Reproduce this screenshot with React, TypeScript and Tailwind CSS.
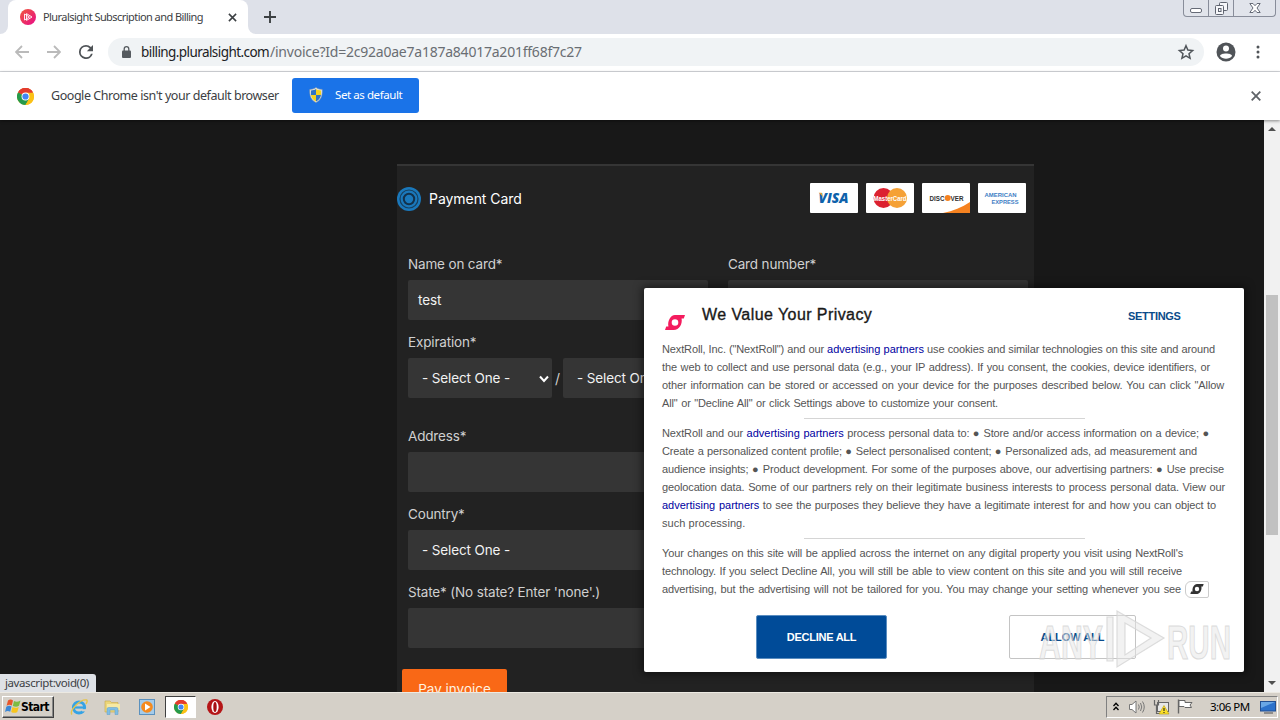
import React from "react";

const ui = "font-['Noto_Sans',sans-serif]";
const arial = "font-['Liberation_Sans',sans-serif]";

function ChromeLogo({ className }: { className: string }) {
  return (
    <svg viewBox="0 0 24 24" className={className}>
      <circle cx="12" cy="12" r="12" fill="#fbc116" />
      <path d="M12 12 L1.6 6 A12 12 0 0 1 22.4 6 Z" fill="#e33b2e" />
      <path d="M12 12 L1.6 6 A12 12 0 0 0 12 24 L17.2 15 Z" fill="#269a4b" />
      <path d="M12 6.5 H22.7 A12 12 0 0 1 12 24 L17.2 15 Z" fill="#fbc116" />
      <path d="M12 12 L1.6 6 A12 12 0 0 1 22.6 6.5 H12 Z" fill="#e33b2e" />
      <circle cx="12" cy="12" r="5.6" fill="#fff" />
      <circle cx="12" cy="12" r="4.4" fill="#4285f4" />
    </svg>
  );
}

function RollMark({ className }: { className: string }) {
  return (
    <svg viewBox="0 0 20 15" className={className} fill="currentColor">
      <path d="M10 0 H20 L18.8 3.6 H16.6 C17.6 9 14.5 15 8.5 15 H0 L1.2 11.4 H3.4 C2.4 6 5.5 0 10 0 Z M10 4.2 A3.3 3.3 0 1 0 10 10.8 A3.3 3.3 0 1 0 10 4.2 Z" fillRule="evenodd" />
    </svg>
  );
}

function TabStrip() {
  return (
    <div className="flex h-[34px] justify-between bg-[#dee1e9]">
      <div className="flex">
        <div className="flex w-2 items-end bg-white">
          <div className="h-full w-2 rounded-br-lg bg-[#dee1e9]" />
        </div>
        <div className="flex w-60 items-center rounded-t-lg bg-white pl-3">
          <svg viewBox="0 0 16 16" className="h-4 w-4 shrink-0">
            <defs>
              <linearGradient id="ps" x1="0" y1="0" x2="1" y2="1">
                <stop offset="0" stopColor="#f05a3a" />
                <stop offset="1" stopColor="#e80a89" />
              </linearGradient>
            </defs>
            <circle cx="8" cy="8" r="8" fill="url(#ps)" />
            <path d="M6.5 4.6 L12 8 L6.5 11.4 Z M4.5 5 V11 L9.5 8 Z" fill="none" stroke="#fff" strokeWidth="0.9" />
          </svg>
          <span className={`${ui} ml-[7px] w-[184px] shrink-0 whitespace-nowrap text-[11px] tracking-[-0.56px] text-[#3c4043]`}>
            Pluralsight Subscription and Billing
          </span>
          <svg viewBox="0 0 10 10" className="ml-px h-[9px] w-[9px] shrink-0" stroke="#3c4043" strokeWidth="1.7">
            <path d="M1 1 L9 9 M9 1 L1 9" />
          </svg>
        </div>
        <div className="w-2 bg-white">
          <div className="h-full rounded-bl-lg bg-[#dee1e9]" />
        </div>
        <svg viewBox="0 0 12 12" className="ml-2 mt-[11px] h-3 w-3" stroke="#3c4043" strokeWidth="1.9">
          <path d="M6 0 V12 M0 6 H12" />
        </svg>
      </div>
      <div className="mr-[4px] flex h-[17px] w-[93px] rounded-b-[4px] border border-t-0 border-[#888d9a] bg-[#e1e4eb]">
        <div className="flex w-[25px] justify-center border-r border-[#888d9a] pt-2">
          <div className="h-[5px] w-3 rounded-[2px] border border-[#666b77] bg-white" />
        </div>
        <div className="flex w-[25px] justify-center border-r border-[#888d9a] pt-[2px]">
          <svg viewBox="0 0 13 13" className="h-[13px] w-[13px]" fill="#f6f7fa" stroke="#5f6470">
            <rect x="4.5" y="0.5" width="8" height="8" rx="1" />
            <rect x="0.5" y="3.5" width="8" height="9" rx="1" />
            <rect x="3.5" y="6.5" width="2.5" height="3" />
          </svg>
        </div>
        <div className="flex flex-1 justify-center pt-[3px]">
          <svg viewBox="0 0 12 10" className="h-[10px] w-3" fill="#fff" stroke="#666b77">
            <path d="M0.8 0.5 H4 L6 2.7 L8 0.5 H11.2 L8 5 L11.2 9.5 H8 L6 7.3 L4 9.5 H0.8 L4 5 Z" />
          </svg>
        </div>
      </div>
    </div>
  );
}

function Toolbar() {
  return (
    <div className="flex h-[38px] items-center border-b border-[#d8dade] bg-white pb-px">
      <div className="flex w-[108px] items-center pl-[15px]">
        <svg viewBox="0 0 14 14" className="h-[14px] w-[14px]" fill="none" stroke="#bababa" strokeWidth="1.8">
          <path d="M14 7 H1.5 M7 1 L1 7 L7 13" />
        </svg>
        <svg viewBox="0 0 14 14" className="ml-[18px] h-[14px] w-[14px]" fill="none" stroke="#bababa" strokeWidth="1.8">
          <path d="M0 7 H12.5 M7 1 L13 7 L7 13" />
        </svg>
        <svg viewBox="4 4 16 16" className="ml-[18px] h-[14px] w-[14px]" fill="#4f5357">
          <path d="M17.65 6.35A7.96 7.96 0 0 0 12 4a8 8 0 1 0 7.73 10h-2.08A6 6 0 1 1 12 6c1.66 0 3.14.69 4.22 1.78L13 11h7V4z" />
        </svg>
      </div>
      <div className="flex h-7 w-[1096px] items-center rounded-full bg-[#f0f3f5] pl-[14px]">
        <svg viewBox="0 0 9 12" className="h-3 w-[9px]">
          <rect x="0" y="4.5" width="9" height="7.5" rx="1" fill="#555a5f" />
          <path d="M2.2 5 V3 A2.3 2.3 0 0 1 6.8 3 V5" fill="none" stroke="#555a5f" strokeWidth="1.3" />
        </svg>
        <div className={`${ui} ml-[10px] flex whitespace-nowrap text-[14px] leading-5 text-[#6a6e73]`}>
          <span className="w-[129px] text-[13.5px] tracking-[-0.58px] text-[#202124]">billing.pluralsight.com</span>
          <span className="tracking-[-0.23px]">/invoice?Id=2c92a0ae7a187a84017a201ff68f7c27</span>
        </div>
        <svg viewBox="0 0 24 24" className="ml-auto mr-[9px] h-[18px] w-[18px]" fill="none" stroke="#50555a" strokeWidth="2">
          <path d="M12 3.6 L14.5 9.4 L20.8 10 L16 14.2 L17.4 20.4 L12 17.1 L6.6 20.4 L8 14.2 L3.2 10 L9.5 9.4 Z" />
        </svg>
      </div>
      <svg viewBox="0 0 20 20" className="ml-3 h-5 w-5">
        <circle cx="10" cy="10" r="9.5" fill="#505458" />
        <circle cx="10" cy="6.6" r="3" fill="#fff" />
        <path d="M4 14 C4 10.5 16 10.5 16 14 C13.5 17.5 6.5 17.5 4 14 Z" fill="#fff" />
      </svg>
      <svg viewBox="0 0 4 14" className="ml-5 h-[14px] w-1" fill="#505458">
        <circle cx="2" cy="2" r="1.5" />
        <circle cx="2" cy="7" r="1.5" />
        <circle cx="2" cy="12" r="1.5" />
      </svg>
    </div>
  );
}

function InfoBar() {
  return (
    <div className="relative z-10 flex h-12 items-center bg-white pl-[17px] shadow-[0_1px_3px_rgba(0,0,0,0.45)]">
      <ChromeLogo className="h-[17px] w-[17px]" />
      <span className={`${ui} ml-[17px] w-[241px] whitespace-nowrap text-[12.5px] tracking-[-0.45px] text-[#3c4043]`}>
        Google Chrome isn't your default browser
      </span>
      <button className="mb-[2px] flex h-[35px] w-[127px] items-center rounded-[3px] bg-[#1a73e8] pl-[17px]">
        <svg viewBox="0 0 14 16" className="h-4 w-[14px]">
          <path d="M7 0.5 C5 2 3 2.4 0.8 2.4 C0.5 9 2 13 7 15.5 C12 13 13.5 9 13.2 2.4 C11 2.4 9 2 7 0.5 Z" fill="#e8e9e4" stroke="#8c98a6" strokeWidth="0.6" />
          <path d="M7 2 C5.5 3 4 3.4 2 3.5 L2 8 H7 Z M7 8 H12 C11.5 11 10 13 7 14.4 Z" fill="#2f73c7" />
          <path d="M7 2 C8.5 3 10 3.4 12 3.5 L12 8 H7 Z M7 8 H2 C2.5 11 4 13 7 14.4 Z" fill="#f5d21f" />
        </svg>
        <span className={`${ui} ml-[12px] whitespace-nowrap text-[11.5px] tracking-[-0.42px] text-white`}>Set as default</span>
      </button>
      <svg viewBox="0 0 10 10" className="ml-auto mr-[19px] h-[10px] w-[10px]" stroke="#5f6368" strokeWidth="1.8">
        <path d="M0.7 0.7 L9.3 9.3 M9.3 0.7 L0.7 9.3" />
      </svg>
    </div>
  );
}

function CardLogos() {
  return (
    <div className="flex gap-2">
      <svg viewBox="0 0 48 30" className="h-[30px] w-12">
        <rect width="48" height="30" rx="1" fill="#fff" />
        <text x="8.5" y="20" fontFamily="Open Sans, sans-serif" fontWeight="800" fontStyle="italic" fontSize="14" textLength="30" lengthAdjust="spacingAndGlyphs" fill="#0e62ab">VISA</text>
        <path d="M8.6 9.8 H11.6 L13.4 15 C12 12.6 10.6 11 8.6 9.8 Z" fill="#f0a52b" />
      </svg>
      <svg viewBox="0 0 48 30" className="h-[30px] w-12">
        <rect width="48" height="30" rx="1" fill="#fff" />
        <circle cx="17.5" cy="15" r="10" fill="#dc2130" />
        <circle cx="31" cy="15" r="10" fill="#f5a136" />
        <text x="7.5" y="18" fontFamily="Liberation Sans, sans-serif" fontWeight="700" fontSize="8" textLength="33" lengthAdjust="spacingAndGlyphs" fill="#fff">MasterCard</text>
      </svg>
      <svg viewBox="0 0 48 30" className="h-[30px] w-12">
        <rect width="48" height="30" rx="1" fill="#fff" />
        <path d="M21 30 C31 28 40 24.5 48 19 V30 Z" fill="#f58220" />
        <text x="7.5" y="17.7" fontFamily="Liberation Sans, sans-serif" fontWeight="700" fontSize="7.5" textLength="15" lengthAdjust="spacingAndGlyphs" fill="#2f2f31">DISC</text>
        <circle cx="25.7" cy="15" r="3" fill="#f58220" />
        <text x="28.5" y="17.7" fontFamily="Liberation Sans, sans-serif" fontWeight="700" fontSize="7.5" textLength="13" lengthAdjust="spacingAndGlyphs" fill="#2f2f31">VER</text>
      </svg>
      <svg viewBox="0 0 48 30" className="h-[30px] w-12">
        <rect width="48" height="30" rx="1" fill="#fff" />
        <g fontFamily="Liberation Sans, sans-serif" fontWeight="700" fontSize="6" fill="#3d7ec4">
          <text x="6.5" y="14" textLength="32" lengthAdjust="spacingAndGlyphs">AMERICAN</text>
          <text x="13.5" y="21" textLength="27" lengthAdjust="spacingAndGlyphs">EXPRESS</text>
        </g>
      </svg>
    </div>
  );
}

function Label({ children }: { children: React.ReactNode }) {
  return <div className="h-7 whitespace-nowrap pt-[2px] text-[13.5px] leading-5 tracking-[-0.16px] text-[#d0d0d0]">{children}</div>;
}

const field = "flex h-10 items-center rounded-[2px] bg-[#353535] pt-px text-[13.5px] tracking-[-0.12px] text-[#f2f2f2] whitespace-nowrap";

function PaymentForm() {
  return (
    <div className="ml-[397px] mt-11 flex h-[528px] w-[637px] flex-col border-t-2 border-[#353535] bg-[#222] font-['Inter',sans-serif]">
      <div className="flex h-[66px] shrink-0 items-center pr-2">
        <svg viewBox="0 0 24 24" className="h-6 w-6" fill="none" stroke="#1b7fc4">
          <circle cx="12" cy="12" r="12" fill="#1a78bb" stroke="none" />
          <circle cx="12" cy="12" r="9" stroke="#183f5d" strokeWidth="1.2" />
          <circle cx="12" cy="12" r="5.2" stroke="#12314b" strokeWidth="2" />
        </svg>
        <span className="mb-px ml-2 text-[14px] tracking-[-0.05px] text-white">Payment Card</span>
        <div className="mb-[2px] ml-auto">
          <CardLogos />
        </div>
      </div>
      <div className="flex gap-5 pl-[11px] pt-5">
        <div className="w-[300px]">
          <Label>Name on card*</Label>
          <div className={`${field} px-[10px]`}>test</div>
        </div>
        <div className="w-[300px]">
          <Label>Card number*</Label>
          <div className={field} />
        </div>
      </div>
      <div className="w-[311px] pl-[11px] pt-[10px]">
        <Label>Expiration*</Label>
        <div className="flex items-center">
          <div className={`${field} w-36 justify-between pl-[14px] pr-[3px]`}>
            <span>- Select One -</span>
            <svg viewBox="0 0 10 8" className="h-2 w-[10px]" fill="none" stroke="#fff" strokeWidth="2">
              <path d="M1 1.5 L5 6 L9 1.5" />
            </svg>
          </div>
          <span className="w-[11px] text-center text-[14px] text-[#d0d0d0]">/</span>
          <div className={`${field} w-36 pl-[14px]`}>- Select One -</div>
        </div>
      </div>
      <div className="w-[311px] pl-[11px] pt-[26px]">
        <Label>Address*</Label>
        <div className={field} />
      </div>
      <div className="w-[311px] pl-[11px] pt-[10px]">
        <Label>Country*</Label>
        <div className={`${field} pl-[14px]`}>- Select One -</div>
      </div>
      <div className="w-[311px] pl-[11px] pt-[10px]">
        <Label>State* (No state? Enter 'none'.)</Label>
        <div className={field} />
      </div>
      <button className="ml-[5px] mt-[21px] h-10 w-[105px] shrink-0 rounded-[2px] bg-[#f96816] text-[13.5px] text-[#fff3e0]">
        Pay invoice
      </button>
    </div>
  );
}

function Line({ w, children }: { w: string; children: React.ReactNode }) {
  return <div className={`${w} h-[18px] whitespace-nowrap [text-align-last:justify]`}>{children}</div>;
}

function Partners() {
  return <a className="tracking-[0px] text-[#0000a0]">advertising partners</a>;
}

function PrivacyDialog() {
  return (
    <div className={`absolute left-[644px] top-[168px] flex h-[384px] w-[600px] flex-col rounded-[2px] bg-white pl-[18px] shadow-[0_0_8px_2px_rgba(0,0,0,0.5)] ${arial}`}>
      <div className="flex h-[52px] shrink-0">
        <RollMark className="ml-[3px] mt-[27px] h-[15px] w-5 text-[#f41c5e]" />
        <h1 className="ml-[17px] mt-[16px] w-[426px] whitespace-nowrap text-[16px] leading-[22px] tracking-[0.43px] text-[#191919] [-webkit-text-stroke:0.35px]">We Value Your Privacy</h1>
        <span className="mt-[19px] text-[11px] font-bold leading-[18px] tracking-[-0.3px] text-[#0a4b8a]">SETTINGS</span>
      </div>
      <div className="text-[11px] leading-[18px] tracking-[-0.13px] text-[#555]">
        <Line w="w-[553px]">NextRoll, Inc. ("NextRoll") and our <Partners /> use cookies and similar technologies on this site and around</Line>
        <Line w="w-[548px]">the web to collect and use personal data (e.g., your IP address). If you consent, the cookies, device identifiers, or</Line>
        <Line w="w-[562px]">other information can be stored or accessed on your device for the purposes described below. You can click "Allow</Line>
        <Line w="w-[336px]">All" or "Decline All" or click Settings above to customize your consent.</Line>
        <div className="mb-[5px] ml-[142px] mt-[6px] h-px w-[281px] bg-[#d5d5d5]" />
        <Line w="w-[547px]">NextRoll and our <Partners /> process personal data to: ● Store and/or access information on a device; ●</Line>
        <Line w="w-[535px]">Create a personalized content profile; ● Select personalised content; ● Personalized ads, ad measurement and</Line>
        <Line w="w-[562px]">audience insights; ● Product development. For some of the purposes above, our advertising partners: ● Use precise</Line>
        <Line w="w-[563px]">geolocation data. Some of our partners rely on their legitimate business interests to process personal data. View our</Line>
        <Line w="w-[554px]"><Partners /> to see the purposes they believe they have a legitimate interest for and how you can object to</Line>
        <div className="h-[18px] tracking-[0.05px]">such processing.</div>
        <div className="mb-[5px] ml-[142px] mt-[6px] h-px w-[281px] bg-[#d5d5d5]" />
        <Line w="w-[521px]">Your changes on this site will be applied across the internet on any digital property you visit using NextRoll's</Line>
        <Line w="w-[520px]">technology. If you select Decline All, you will still be able to view content on this site and you will still receive</Line>
        <div className="flex items-center">
          <Line w="w-[519px]">advertising, but the advertising will not be tailored for you. You may change your setting whenever you see</Line>
          <div className="ml-1 flex h-[17px] w-6 items-center justify-center rounded-l-[6px] rounded-r-[2px] border border-[#ccc]">
            <RollMark className="h-[10px] w-[14px] text-[#333]" />
          </div>
        </div>
      </div>
      <div className="mt-[17px] flex text-[11px] font-bold">
        <button className="ml-[94px] h-[44px] w-[131px] rounded-[2px] border border-[#5a8dc0] bg-[#004b98] pt-px tracking-[-0.25px] text-white">DECLINE ALL</button>
        <button className="ml-[122px] h-[44px] w-[127px] rounded-[2px] border border-[#c4c4c4] bg-white tracking-[-0.05px] text-[#0a4b8a]">ALLOW ALL</button>
      </div>
    </div>
  );
}

function Watermark() {
  return (
    <svg viewBox="0 0 200 64" className="pointer-events-none absolute left-[1036px] top-[488px] h-16 w-[200px]">
      <g fill="#e6e6e6" fillOpacity="0.5" stroke="#d4d4d4" strokeWidth="1.2" strokeOpacity="0.8" fontFamily="Liberation Sans Narrow, Liberation Sans, sans-serif" fontWeight="700" fontSize="49">
        <text x="3" y="51" textLength="64" lengthAdjust="spacingAndGlyphs">ANY</text>
        <text x="131" y="51" textLength="64" lengthAdjust="spacingAndGlyphs">RUN</text>
        <path fillRule="evenodd" d="M81 3 L128 30 L81 59 Z M89 15 L115 30 L89 47 Z" />
        <path d="M71 9 H77 V53 H71 Z" />
      </g>
    </svg>
  );
}

function Scrollbar() {
  return (
    <div className="flex w-4 flex-col items-center bg-[#f1f1f1]">
      <svg viewBox="0 0 8 4" className="mt-[7px] h-1 w-2" fill="#505050"><path d="M0 4 L4 0 L8 4 Z" /></svg>
      <div className="mt-[164px] h-60 w-3 bg-[#c1c1c1]" />
      <svg viewBox="0 0 8 4" className="mb-[7px] mt-auto h-1 w-2" fill="#505050"><path d="M0 0 L4 4 L8 0 Z" /></svg>
    </div>
  );
}

function Taskbar() {
  return (
    <div className="flex h-7 items-center border-t border-[#ece9e2] bg-[#d5d0c8]">
      <button className="ml-[2px] flex h-[22px] w-[52px] items-center border border-b-[#404040] border-l-white border-r-[#404040] border-t-white pl-[2px] shadow-[inset_-1px_-1px_0_#888]">
        <svg viewBox="0 0 16 15" className="h-[15px] w-4 shrink-0">
          <path d="M3 1.5 C5 0 6.5 0.5 8 1.5 L6.8 6.5 C5 5.5 3.6 5.5 1.6 6.7 Z" fill="#e8562a" />
          <path d="M9 2 C11 3.2 13 3 15.5 1.6 L14 6.8 C12 8 10 8 7.8 6.9 Z" fill="#7dbb42" />
          <path d="M1.3 7.8 C3.3 6.5 5 6.6 6.5 7.6 L5.2 12.8 C3.5 11.8 2 11.8 0 13 Z" fill="#3b87d6" />
          <path d="M7.5 8 C9.5 9.2 11.5 9 13.7 7.9 L12.3 13 C10.5 14.3 8.3 14 6.2 13 Z" fill="#f8c51c" />
        </svg>
        <span className="pt-px font-['DejaVu_Sans_Condensed','DejaVu_Sans',sans-serif] text-[12px] font-bold tracking-[-0.55px] text-black">Start</span>
      </button>
      <svg viewBox="0 0 18 18" className="ml-4 h-[18px] w-[18px]" fill="none">
        <circle cx="9" cy="9.5" r="5.6" stroke="#35a3e5" strokeWidth="3" />
        <path d="M4 9.5 H14.5" stroke="#35a3e5" strokeWidth="2.2" />
        <path d="M12 11.2 H18 V13.4 H12 Z" fill="#d5d0c8" />
        <path d="M2 16.5 C-1 13 10 1 16.5 2 C18 2.6 16.5 5 16 6" stroke="#e6c44a" strokeWidth="1.4" />
      </svg>
      <svg viewBox="0 0 17 16" className="ml-4 h-4 w-[17px]">
        <path d="M1 2 H6 L7.5 3.5 H14 V13 H1 Z" fill="#ecd67b" stroke="#c7a84b" strokeWidth="0.6" />
        <path d="M3 5 H16 V11 H3 Z" fill="#f6e9a4" />
        <path d="M3 15.5 V10 Q3 8.5 4.5 8.5 H12.5 Q14 8.5 14 10 V15.5 H11 V11 H6 V15.5 Z" fill="#80bee4" stroke="#5c9cc8" strokeWidth="0.5" />
      </svg>
      <svg viewBox="0 0 16 16" className="ml-[18px] h-4 w-4">
        <rect x="0.5" y="0.5" width="15" height="15" fill="#a4cbea" stroke="#5b91be" />
        <circle cx="8" cy="8" r="5.8" fill="#f58a1e" />
        <path d="M6 4.6 L11.5 8 L6 11.4 Z" fill="#fff" />
      </svg>
      <div className="ml-[10px] flex h-[22px] w-[31px] items-center justify-center border border-l-[#404040] border-t-[#404040] border-b-white border-r-white bg-white">
        <ChromeLogo className="h-[14px] w-[14px]" />
      </div>
      <svg viewBox="0 0 16 16" className="ml-[11px] h-4 w-4">
        <circle cx="8" cy="8" r="8" fill="#b51517" />
        <ellipse cx="8" cy="8" rx="3.6" ry="6" fill="#fff" />
        <ellipse cx="8" cy="8" rx="1.7" ry="5" fill="#a80f12" />
      </svg>
      <div className="ml-auto mr-[2px] flex h-[22px] w-[172px] items-center border border-b-white border-l-[#808080] border-r-white border-t-[#808080]">
        <svg viewBox="0 0 6 9" className="ml-[6px] h-[9px] w-[6px]" fill="none" stroke="#000" strokeWidth="1.3">
          <path d="M0.5 4 L3 1.2 L5.5 4 M0.5 8 L3 5.2 L5.5 8" />
        </svg>
        <svg viewBox="0 0 16 14" className="ml-[10px] h-[14px] w-4" fill="none" stroke="#777">
          <path d="M0.5 4.5 H3 L7 1 V13 L3 9.5 H0.5 Z" fill="#fff" />
          <path d="M9.5 4.5 Q11 7 9.5 9.5 M11.5 3 Q14 7 11.5 11 M13.5 1.5 Q17 7 13.5 12.5" />
        </svg>
        <svg viewBox="0 0 17 16" className="ml-2 h-4 w-[17px]">
          <rect x="4.5" y="3.5" width="11" height="9" fill="#e7e7e7" stroke="#666" />
          <path d="M1.5 1 V6 H5.5 V1 M3.5 6 V14.5 H8" fill="none" stroke="#666" strokeWidth="1.2" />
          <path d="M11 6.5 L16 15 H6 Z" fill="#fce029" stroke="#b79b08" strokeWidth="0.6" />
          <path d="M11 9 V12 M11 13 V14" stroke="#222" strokeWidth="1.1" />
        </svg>
        <svg viewBox="0 0 16 15" className="ml-[7px] h-[15px] w-4" fill="#fff" stroke="#666">
          <path d="M1.5 0.5 V14.5" strokeWidth="1.4" />
          <path d="M2 1.5 H8 V3.5 H15 L13 6 L14.5 8.5 H8 L7 7.5 H2 Z" />
        </svg>
        <span className={`${ui} ml-[17px] w-[42px] whitespace-nowrap text-[11.5px] tracking-[-0.5px] text-black`}>3:06 PM</span>
        <svg viewBox="0 0 16 14" className="ml-[8px] h-[14px] w-4">
          <rect x="0.5" y="1.5" width="15" height="9.5" fill="#2c72cb" stroke="#224f91" />
          <path d="M1 2 H15 L1 8 Z" fill="#69a7e6" />
          <path d="M4 13 H13" stroke="#777" strokeWidth="1.5" />
        </svg>
      </div>
    </div>
  );
}

export default function App() {
  return (
    <div className="flex h-[720px] w-[1280px] flex-col overflow-hidden">
      <TabStrip />
      <Toolbar />
      <InfoBar />
      <div className="relative flex h-[572px] overflow-hidden">
        <main className="flex-1 bg-[#181818]">
          <PaymentForm />
        </main>
        <Scrollbar />
        <PrivacyDialog />
        <Watermark />
        <div className={`${ui} absolute bottom-0 left-0 flex h-[18px] w-24 items-center whitespace-nowrap rounded-tr-[3px] bg-[#dee1e6] pl-[5px] text-[11.5px] tracking-[-0.4px] text-[#3c4043]`}>
          javascript:void(0)
        </div>
      </div>
      <Taskbar />
    </div>
  );
}
